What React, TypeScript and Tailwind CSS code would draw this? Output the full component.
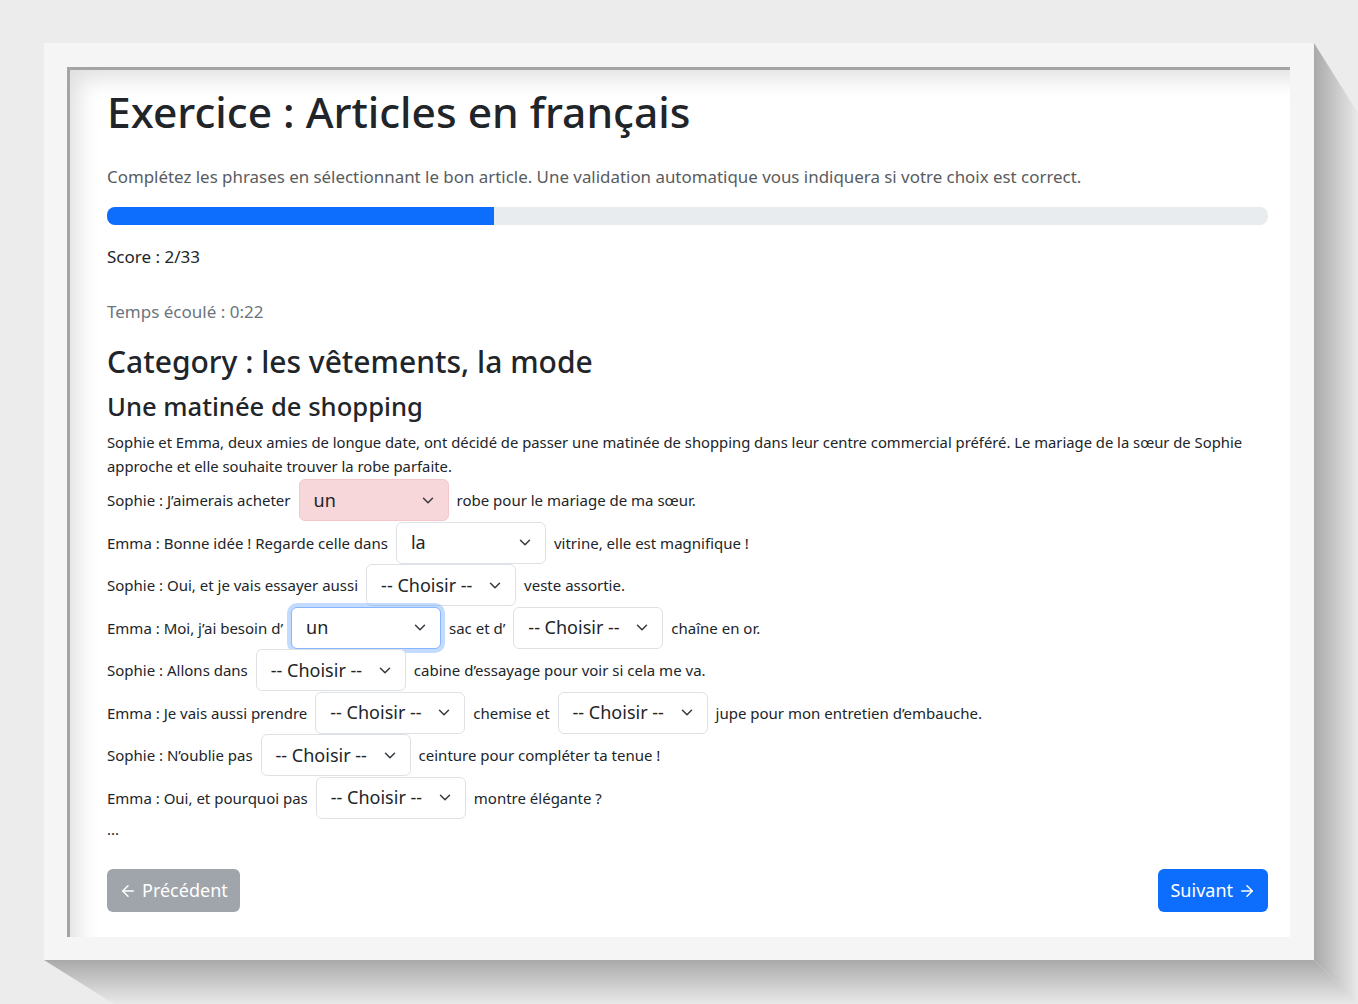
import { ArrowLeft, ArrowRight } from 'lucide-react';

type Part = string | { value: string; state?: 'wrong' | 'focus' };

const dialog: Part[][] = [
  ['Sophie : J’aimerais acheter', { value: 'un', state: 'wrong' }, 'robe pour le mariage de ma sœur.'],
  ['Emma : Bonne idée ! Regarde celle dans', { value: 'la' }, 'vitrine, elle est magnifique !'],
  ['Sophie : Oui, et je vais essayer aussi', { value: '-- Choisir --' }, 'veste assortie.'],
  ['Emma : Moi, j’ai besoin d’', { value: 'un', state: 'focus' }, 'sac et d’', { value: '-- Choisir --' }, 'chaîne en or.'],
  ['Sophie : Allons dans', { value: '-- Choisir --' }, 'cabine d’essayage pour voir si cela me va.'],
  ['Emma : Je vais aussi prendre', { value: '-- Choisir --' }, 'chemise et', { value: '-- Choisir --' }, 'jupe pour mon entretien d’embauche.'],
  ['Sophie : N’oublie pas', { value: '-- Choisir --' }, 'ceinture pour compléter ta tenue !'],
  ['Emma : Oui, et pourquoi pas', { value: '-- Choisir --' }, 'montre élégante ?'],
];

function Chevron() {
  return (
    <svg width="12" height="9" viewBox="0 0 16 12" className="shrink-0">
      <path d="m2 3 6 6 6-6" fill="none" stroke="#343a40" strokeWidth="2" strokeLinecap="round" strokeLinejoin="round" />
    </svg>
  );
}

function FakeSelect({ value, state }: { value: string; state?: 'wrong' | 'focus' }) {
  const tone =
    state === 'wrong'
      ? 'bg-[#f8d7da] border-[#f5c6cb]'
      : state === 'focus'
        ? 'bg-white border-[#86b7fe] shadow-[0_0_0_4px_rgba(13,110,253,0.25)]'
        : 'bg-white border-[#dee2e6]';
  return (
    <div
      className={`mx-2 flex h-[42px] w-[150px] shrink-0 items-center justify-between rounded-[6px] border pl-[14px] pr-[14px] text-[18px] text-[#212529] ${tone}`}
    >
      <span>{value}</span>
      <Chevron />
    </div>
  );
}

export default function App() {
  return (
    <div className="relative min-h-screen w-full overflow-hidden bg-[#ececec] pl-[44px] pt-[43px] font-['Noto_Sans',sans-serif] text-[#212529]">
      {/* 3d drop shadow of the frame */}
      <svg className="absolute left-[44px] top-[43px]" width="1314" height="961" viewBox="0 0 1314 961">
        <defs>
          <linearGradient id="sr" x1="0" x2="1" y1="0" y2="0">
            <stop offset="0" stopColor="#a9a9a9" />
            <stop offset="1" stopColor="#e9e9e9" />
          </linearGradient>
          <linearGradient id="sb" x1="0" x2="0" y1="0" y2="1">
            <stop offset="0" stopColor="#a9a9a9" />
            <stop offset="1" stopColor="#e9e9e9" />
          </linearGradient>
        </defs>
        <polygon points="1270,0 1314,70 1314,961 1270,917" fill="url(#sr)" />
        <polygon points="0,917 1270,917 1314,961 70,961" fill="url(#sb)" />
      </svg>

      <div className="relative h-[917px] w-[1270px] bg-[#f5f5f5] pb-[23px] pl-[23px] pr-[24px] pt-[24px]">
        <div className="h-[870px] border-l-[3px] border-t-[3px] border-[#a4a4a4] bg-white pl-[37px] pr-[22px] pt-[16px] shadow-[inset_22px_22px_22px_-14px_rgba(0,0,0,0.13)]">
          <h1 className="text-[42.5px] font-medium leading-[51px] text-[#212529]">Exercice : Articles en français</h1>

          <p className="mt-[26px] text-[16.9px] leading-[27px] text-[#595c5f]">
            Complétez les phrases en sélectionnant le bon article. Une validation automatique vous indiquera si votre choix est correct.
          </p>

          <div className="mt-[17px] flex h-[18px] w-full overflow-hidden rounded-[8px] bg-[#e9ecef]">
            <div className="h-full w-[33.33%] bg-[#0d6efd]" />
          </div>

          <p className="mt-[19px] text-[17px] leading-[1.5]">Score : 2/33</p>
          <p className="mt-[29px] text-[17px] leading-[1.5] text-[#6c757d]">Temps écoulé : 0:22</p>

          <h2 className="mt-[19px] text-[30px] font-medium leading-[37px]">Category : les vêtements, la mode</h2>
          <h3 className="mt-[11px] text-[25.6px] font-medium leading-[32px]">Une matinée de shopping</h3>

          <p className="mt-[7px] text-[14.8px] leading-[24px]">
            Sophie et Emma, deux amies de longue date, ont décidé de passer une matinée de shopping dans leur centre commercial préféré. Le mariage de la sœur de Sophie approche et elle souhaite trouver la robe parfaite.
          </p>

          <div className="mt-[1px] flex flex-col text-[15px]">
            {dialog.map((row, i) => (
              <div key={i} className="flex h-[42.5px] items-center">
                {row.map((part, j) =>
                  typeof part === 'string' ? (
                    <span key={j} className="whitespace-nowrap">{part}</span>
                  ) : (
                    <FakeSelect key={j} value={part.value} state={part.state} />
                  ),
                )}
              </div>
            ))}
            <p className="-mt-[2px] leading-[24px]">...</p>
          </div>

          <div className="mt-[28px] flex items-center justify-between">
            <button className="flex h-[43px] items-center gap-[5px] rounded-[6px] bg-[#a0a5ab] px-[12px] text-[18px] text-white">
              <ArrowLeft className="h-[18px] w-[18px]" strokeWidth={2} />
              Précédent
            </button>
            <button className="flex h-[43px] items-center gap-[5px] rounded-[6px] bg-[#0d6efd] px-[12px] text-[18px] text-white">
              Suivant
              <ArrowRight className="h-[18px] w-[18px]" strokeWidth={2} />
            </button>
          </div>
        </div>
      </div>
    </div>
  );
}
